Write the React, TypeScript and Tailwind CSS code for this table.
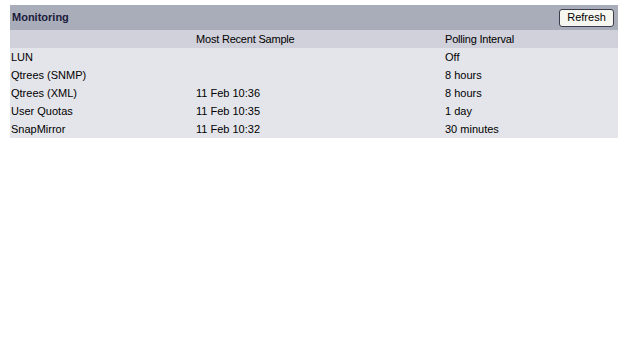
import React from "react";

const rows = [
  ["LUN", "", "Off"],
  ["Qtrees (SNMP)", "", "8 hours"],
  ["Qtrees (XML)", "11 Feb 10:36", "8 hours"],
  ["User Quotas", "11 Feb 10:35", "1 day"],
  ["SnapMirror", "11 Feb 10:32", "30 minutes"],
];

export default function App() {
  return (
    <div className="w-[626px] h-[357px] bg-white pt-[5px] pl-[10px] text-[11px] text-black" style={{ fontFamily: '"Liberation Sans", Arial, sans-serif' }}>
      <div className="w-[608px]">
        <div className="h-[25px] bg-[#a9acb9] flex items-center justify-between pl-[2px] pr-[4px]">
          <span className="font-bold text-[#1b1b3c] text-[11px]">Monitoring</span>
          <button className="w-[55px] h-[18px] rounded-[3px] border border-[#3c3c4c] bg-[#f7f7f2] text-[11px] leading-none text-black flex items-center justify-center">Refresh</button>
        </div>
        <div className="h-[18px] bg-[#d0d1da] flex items-center tracking-[-0.2px]">
          <div className="w-[186px] pl-[1px]"></div>
          <div className="w-[249px]">Most Recent Sample</div>
          <div className="flex-1">Polling Interval</div>
        </div>
        <div className="bg-[#e4e5ea]">
          {rows.map((r) => (
            <div key={r[0]} className="h-[18px] flex items-center">
              <div className="w-[186px] pl-[1px]">{r[0]}</div>
              <div className="w-[249px]">{r[1]}</div>
              <div className="flex-1">{r[2]}</div>
            </div>
          ))}
        </div>
      </div>
    </div>
  );
}
